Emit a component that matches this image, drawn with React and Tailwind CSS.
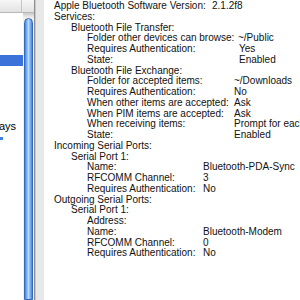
import React from 'react';

const font = { fontFamily: '"Liberation Sans", Arial, sans-serif' };

const Row = ({ pad, label, value, labelW }) => (
    <div className={`flex whitespace-nowrap ${pad}`}>
        <span className={`shrink-0 ${labelW || ''}`}>{label}</span>
        {value && <span>{value}</span>}
    </div>
);

const App = () => {
    const l0 = 'pl-0';
    const l1 = 'pl-[17px]';
    const l2 = 'pl-[33px]';

    return (
        <div className="flex w-[300px] h-[300px] overflow-hidden bg-white text-black" style={font}>
            {/* left list, clipped */}
            <div className="flex flex-col w-[23px] shrink-0 bg-white">
                <div className="h-[13px] border-b border-[#b9b9b9] bg-gradient-to-b from-[#f7f7f7] to-[#e2e2e2] flex">
                    <div className="w-[22px] border-r border-[#c4c4c4]" />
                </div>
                <div className="h-[42px]" />
                <div className="h-[11px] bg-[#3a72d9]" />
                <div className="h-[55px]" />
                <div className="text-[11px] leading-[11px] -ml-[1px]">ays</div>
                <div className="mt-[5px] w-[3px] h-[3px] bg-[#3f7fe0]" />
            </div>

            {/* scrollbar */}
            <div className="flex flex-col w-[12px] shrink-0 border-r border-[#8f8f8f] bg-[#f1f1f1]">
                <div className="h-[13px] border-b border-[#b9b9b9] bg-gradient-to-b from-[#f7f7f7] to-[#e2e2e2]" />
                <div className="h-[5px] bg-gradient-to-b from-[#c9c9c9] to-[#f1f1f1]" />
                <div className="flex-1 mx-[1px] rounded-t-[6px] border border-[#3468b8] bg-gradient-to-r from-[#3f84e6] via-[#b8dafc] to-[#3f84e6]" />
            </div>

            {/* splitter */}
            <div className="w-[9px] shrink-0 bg-[#e8e8e8] border-l border-[#c8c8c8]" />

            {/* info text */}
            <div className="flex-1 pl-[10px] pt-[1px] text-[10px] leading-[10.75px] text-[#111]">
                <Row pad={l0} label="Apple Bluetooth Software Version:" value="2.1.2f8" labelW="w-[158px]" />
                <Row pad={l0} label="Services:" />
                <Row pad={l1} label="Bluetooth File Transfer:" />
                <Row pad={l2} label="Folder other devices can browse:" value="~/Public" labelW="w-[151px]" />
                <Row pad={l2} label="Requires Authentication:" value="Yes" labelW="w-[152px]" />
                <Row pad={l2} label="State:" value="Enabled" labelW="w-[152px]" />
                <Row pad={l1} label="Bluetooth File Exchange:" />
                <Row pad={l2} label="Folder for accepted items:" value="~/Downloads" labelW="w-[147px]" />
                <Row pad={l2} label="Requires Authentication:" value="No" labelW="w-[147px]" />
                <Row pad={l2} label="When other items are accepted:" value="Ask" labelW="w-[147px]" />
                <Row pad={l2} label="When PIM items are accepted:" value="Ask" labelW="w-[147px]" />
                <Row pad={l2} label="When receiving items:" value="Prompt for each" labelW="w-[147px]" />
                <Row pad={l2} label="State:" value="Enabled" labelW="w-[147px]" />
                <Row pad={l0} label="Incoming Serial Ports:" />
                <Row pad={l1} label="Serial Port 1:" />
                <Row pad={l2} label="Name:" value="Bluetooth-PDA-Sync" labelW="w-[116px]" />
                <Row pad={l2} label="RFCOMM Channel:" value="3" labelW="w-[116px]" />
                <Row pad={l2} label="Requires Authentication:" value="No" labelW="w-[116px]" />
                <Row pad={l0} label="Outgoing Serial Ports:" />
                <Row pad={l1} label="Serial Port 1:" />
                <Row pad={l2} label="Address:" />
                <Row pad={l2} label="Name:" value="Bluetooth-Modem" labelW="w-[116px]" />
                <Row pad={l2} label="RFCOMM Channel:" value="0" labelW="w-[116px]" />
                <Row pad={l2} label="Requires Authentication:" value="No" labelW="w-[116px]" />
            </div>
        </div>
    );
};

export default App;
